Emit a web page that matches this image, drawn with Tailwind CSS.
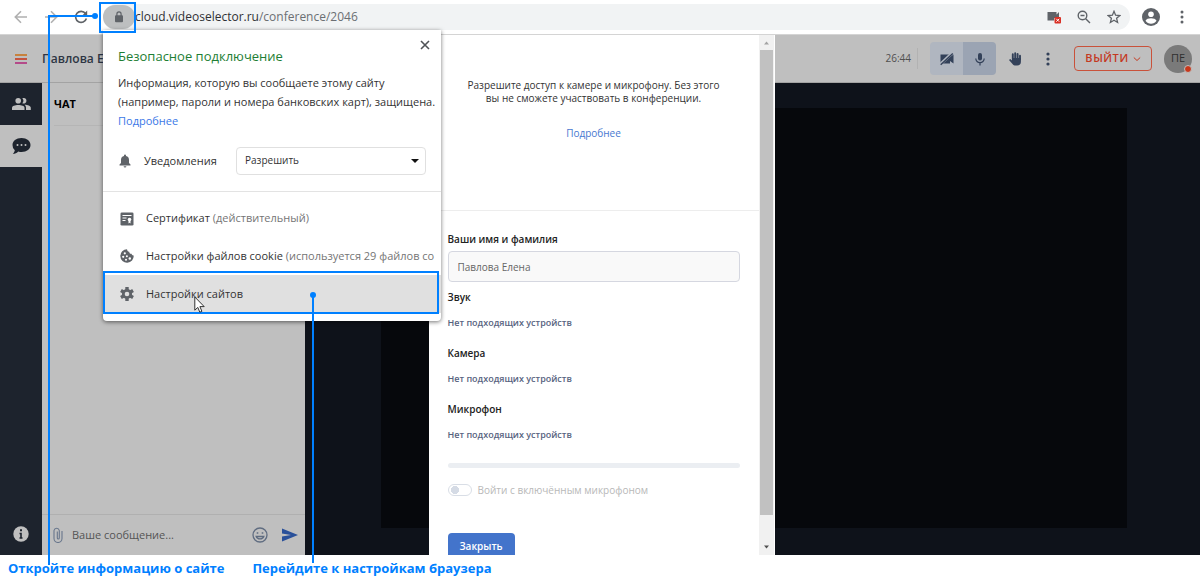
<!DOCTYPE html>
<html lang="ru">
<head>
<meta charset="utf-8">
<meta name="viewport" content="width=device-width, initial-scale=1">
<title>Настройки сайта</title>
<script src="https://cdn.jsdelivr.net/npm/@tailwindcss/browser@4"></script>
</head>
<body class="relative flex min-h-screen flex-col overflow-x-hidden bg-white font-['Open_Sans','Noto_Sans',sans-serif] text-xs text-[#333]">

<!-- Browser toolbar -->
<header class="flex h-[35px] shrink-0 items-center border-b border-[#d4d4d4] pr-3">
  <nav class="flex w-[103px] shrink-0 items-center gap-4 pl-3.5" aria-label="Навигация">
    <button aria-label="Назад" class="text-[#b0b0b0]"><svg class="size-3.5" viewBox="0 0 14 14" fill="none" stroke="currentColor" stroke-width="1.6"><path d="M13 7H1.5M7 1.3 1.3 7 7 12.7"/></svg></button>
    <button aria-label="Вперёд" class="text-[#b0b0b0]"><svg class="size-3.5" viewBox="0 0 14 14" fill="none" stroke="currentColor" stroke-width="1.6"><path d="M1 7h11.500M7 1.300 12.700 7 7 12.700"/></svg></button>
    <button aria-label="Обновить" class="text-[#5f6368]"><svg class="size-3.5" viewBox="0 0 14 14" fill="none" stroke="currentColor" stroke-width="1.700"><path d="M11.500 3.500A5.500 5.500 0 1 0 12.400 8.500"/><path d="M13.200.500v5.200H8z" fill="currentColor" stroke="none"/></svg></button>
  </nav>
  <div class="flex h-[26px] min-w-0 flex-1 items-center rounded-full bg-[#f1f3f4] pr-[9px]">
    <button aria-label="Сведения о сайте" class="flex h-6 w-8 shrink-0 items-center justify-center rounded-full bg-[#bdbfc0] text-[#5f6368]"><svg class="h-3 w-2.5" viewBox="0 0 10 12"><rect x="1" y="4.300" width="8" height="7" rx="1" fill="currentColor"/><path d="M2.900 5V3a2.100 2.100 0 0 1 4.200 0v2" fill="none" stroke="currentColor" stroke-width="1.200"/></svg></button>
    <p class="min-w-0 flex-1 truncate text-xs text-[#6b6f73]"><span class="text-[#303134]">cloud.videoselector.ru</span>/conference/2046</p>
    <div class="flex shrink-0 items-center gap-4 text-[#5f6368]">
      <button aria-label="Камера заблокирована"><svg class="size-3.5" viewBox="0 0 14 14"><path d="M.500 2h9v2.500L12 2v6H7v2.500H.500z" fill="currentColor"/><rect x="7.500" y="7" width="6.500" height="6.500" rx="1" fill="#d93025"/><path d="m9.300 8.800 2.900 2.900m0-2.900-2.900 2.900" stroke="#fff"/></svg></button>
      <button aria-label="Масштаб"><svg class="size-3.5" viewBox="0 0 14 14" fill="none" stroke="currentColor" stroke-width="1.400"><circle cx="5.500" cy="5.500" r="4.300"/><path d="m8.700 8.700 4.300 4.300M3.500 5.500h4"/></svg></button>
      <button aria-label="В закладки"><svg class="size-3.5" viewBox="0 0 14 14" fill="none" stroke="currentColor" stroke-width="1.300"><path d="m7 1.300 1.600 3.900 4.200.400-3.200 2.700 1 4.200L7 10.300l-3.600 2.200 1-4.200-3.200-2.700 4.200-.400z"/></svg></button>
    </div>
  </div>
  <button aria-label="Профиль" class="ml-3 shrink-0 text-[#5f6368]"><svg class="size-[18px]" viewBox="0 0 18 18"><circle cx="9" cy="9" r="9" fill="currentColor"/><circle cx="9" cy="6.300" r="2.800" fill="#fff"/><path d="M3.500 12.800c1.200-3.300 9.800-3.300 11 0a6.600 6.600 0 0 1-11 0z" fill="#fff"/></svg></button>
  <button aria-label="Меню браузера" class="ml-4 shrink-0 px-1 text-[#5f6368]"><svg class="h-3.5 w-1" viewBox="0 0 4 14" fill="currentColor"><circle cx="2" cy="2" r="1.500"/><circle cx="2" cy="7" r="1.500"/><circle cx="2" cy="12" r="1.500"/></svg></button>
</header>

<!-- Conference page -->
<main class="relative flex flex-1 flex-col overflow-hidden">
  <div class="flex h-12 shrink-0 items-center border-b border-[#a3a3a3] bg-[#bfbfbf] pr-2">
    <button aria-label="Меню" class="flex w-[42px] shrink-0 justify-center"><svg class="h-2.5 w-3" viewBox="0 0 12 10"><path d="M0 1h12" stroke="#c9731d" stroke-width="1.600"/><path d="M0 5h12" stroke="#c4391f" stroke-width="1.600"/><path d="M0 9h12" stroke="#b22d7c" stroke-width="1.600"/></svg></button>
    <h1 class="flex-1 text-xs font-semibold text-[#2d3543]">Павлова Елена</h1>
    <time class="border-r border-[#b2b2b2] py-1 pr-1.5 text-[10px] text-[#505050]">26:44</time>
    <div class="ml-3 flex overflow-hidden rounded text-[#334159]">
      <button aria-label="Камера" class="flex h-[33px] w-[33px] items-center justify-center bg-[#b0b6c0]"><svg class="size-3.5" viewBox="0 0 14 14"><path d="M.500 2.500H10V5l3.500-2.500v9L10 9v2.500H.500z" fill="currentColor"/><path d="M0 12.500 12.500.800" stroke="#b0b6c0" stroke-width="3"/><path d="M.700 12.800 12.800 1.500" stroke="currentColor" stroke-width="1.400"/></svg></button>
      <button aria-label="Микрофон" class="flex h-[33px] w-[33px] items-center justify-center bg-[#9ba4b3]"><svg class="h-3.5 w-3" viewBox="0 0 12 14"><rect x="4" y="1" width="4" height="7.500" rx="2" fill="currentColor"/><path d="M1.800 6.500a4.200 4.200 0 0 0 8.400 0M6 10.700v2.800" fill="none" stroke="currentColor" stroke-width="1.200"/></svg></button>
    </div>
    <button aria-label="Поднять руку" class="ml-3 text-[#334159]"><svg class="h-3.5 w-3.5" viewBox="0 0 14 14"><path d="M4.800 7V2.200M7.200 6.500V1.300M9.600 6.800V1.900M12 7.500V3.700" stroke="currentColor" stroke-width="1.900" stroke-linecap="round"/><path d="M4 6h8.900v4c0 2-1.400 3.600-3.700 3.600H7.800c-1.500 0-2.500-.700-3.300-1.700L1 8c.500-.900 1.500-.900 2.200-.300L4 8.400z" fill="currentColor"/></svg></button>
    <button aria-label="Ещё" class="ml-5 px-1 text-[#334159]"><svg class="h-3.5 w-1" viewBox="0 0 4 14" fill="currentColor"><circle cx="2" cy="2" r="1.600"/><circle cx="2" cy="7" r="1.600"/><circle cx="2" cy="12" r="1.600"/></svg></button>
    <button class="ml-5 flex h-[25px] w-[78px] items-center justify-center gap-1 rounded-sm border border-[#c9513a] text-[11px] font-semibold tracking-wider text-[#c4391f]">ВЫЙТИ<svg class="h-2 w-2" viewBox="0 0 8 8" fill="none" stroke="currentColor"><path d="m.800 2.500 3.200 3 3.200-3"/></svg></button>
    <div class="relative ml-3 flex size-7 items-center justify-center rounded-full bg-[#7a7a7a] text-[11px] text-[#2f2f2f]">ПЕ<span class="absolute right-0 bottom-0 size-2 rounded-full border border-[#bfbfbf] bg-[#c8371b]"></span></div>
  </div>

  <div class="flex min-h-0 flex-1">
    <nav class="flex w-[42px] shrink-0 flex-col bg-[#1d232d] text-[#bfbfbf]" aria-label="Разделы">
      <button aria-label="Участники" class="flex h-[42px] items-center justify-center"><svg class="h-3 w-[19px]" viewBox="0 0 19 12" fill="currentColor"><circle cx="6.200" cy="2.800" r="2.800"/><path d="M0 12V9.800C0 6 12.500 6 12.500 9.800V12z"/><path d="M10.300 5.200a3.600 3.600 0 0 0 0-4.900 2.800 2.800 0 1 1 0 4.900zM14 12V9.800c0-1.300-.600-2.300-1.500-3 2.700-.100 6.300.900 6.300 3V12z"/></svg></button>
      <button aria-label="Чат" class="flex h-[42px] items-center justify-center bg-[#bfbfbf] text-[#1d232d]"><svg class="h-[18px] w-[19px]" viewBox="0 0 19 18"><path d="M9.500 1C14.800 1 18.500 4 18.500 8s-3.700 7-9 7c-1.100 0-2.200-.100-3.200-.500C5 15.800 3 17 .800 17c1-.900 1.800-2.300 2-3.700A6.700 6.700 0 0 1 .500 8C.500 4 4.200 1 9.500 1z" fill="currentColor"/><path d="M5.500 8h.010M9.500 8h.010M13.500 8h.010" stroke="#bfbfbf" stroke-width="2" stroke-linecap="round"/></svg></button>
      <button aria-label="Информация" class="mt-auto flex h-[42px] items-center justify-center"><svg class="size-4" viewBox="0 0 16 16"><circle cx="8" cy="8" r="7.700" fill="currentColor"/><path d="M8 3.300v2" stroke="#1d232d" stroke-width="2"/><path d="M6.500 7.500H8V12M6.500 12h3" stroke="#1d232d" stroke-width="1.600" fill="none"/></svg></button>
    </nav>
    <section class="flex w-[263px] shrink-0 flex-col bg-[#bfbfbf]">
      <h2 class="ml-3 flex h-[43px] items-center border-b border-[#b5b5b5] text-[11px] font-bold text-black">ЧАТ</h2>
      <div class="flex-1"></div>
      <form class="flex h-[41px] items-center border-t border-[#b0b0b0] pr-[7px] pl-[11px]">
        <button type="button" aria-label="Прикрепить файл" class="text-[#68768c]"><svg class="h-4 w-2.5" viewBox="0 0 10 16" fill="none" stroke="currentColor" stroke-width="1.100"><path d="M9 4v7.500a4 4 0 0 1-8 0V3.500a2.700 2.700 0 0 1 5.300 0V11a1 1 0 0 1-2 0V4.500"/></svg></button>
        <input aria-label="Ваше сообщение" placeholder="Ваше сообщение..." class="ml-[9px] min-w-0 flex-1 bg-transparent text-[11px] placeholder:text-[#555]">
        <button type="button" aria-label="Смайлики" class="text-[#5f6c80]"><svg class="size-4" viewBox="0 0 16 16" fill="none" stroke="currentColor" stroke-width="1.300"><circle cx="8" cy="8" r="7"/><path d="M4.200 9.500c1.200 3.200 6.400 3.200 7.600 0z"/><path d="M5.500 5.300v1.500M10.500 5.300v1.500" stroke-width="1.600"/></svg></button>
        <button aria-label="Отправить" class="ml-3.5 text-[#29509a]"><svg class="h-3.5 w-4" viewBox="0 0 16 14" fill="currentColor"><path d="M0 .500 16 7 0 13.500V8.500L9 7 0 5.500z"/></svg></button>
      </form>
    </section>
    <section class="flex flex-1 bg-[#0e121a] pt-[25px] pr-[73px] pb-[27px] pl-[76px]" aria-label="Видео"><div class="flex-1 bg-[#06080c]"></div></section>
  </div>

  <!-- Device dialog -->
  <div class="absolute inset-0 flex justify-center pl-[3px]">
    <div role="dialog" aria-label="Настройки устройств" class="flex w-[346px] overflow-hidden border-r border-white bg-white">
      <div class="min-w-0 flex-1">
        <div class="flex h-[176px] flex-col items-center border-b border-[#ededed] pt-11 text-center">
          <p class="text-[10px] leading-[13px] text-[#333]">Разрешите доступ к камере и микрофону. Без этого<br>вы не сможете участвовать в конференции.</p>
          <a href="#" class="mt-5 text-[10px] leading-4 text-[#4878d0]">Подробнее</a>
        </div>
        <form class="flex flex-col px-[19px] pt-5">
          <label for="name" class="text-[10px] leading-4 font-semibold text-[#222]">Ваши имя и фамилия</label>
          <input id="name" value="Павлова Елена" class="mt-1 h-[31px] rounded-sm border border-[#d5d7e0] bg-[#f9f9f9] px-[9px] text-[10px] text-[#666]">
          <h3 class="mt-[7px] text-[10px] leading-4 font-semibold text-[#222]">Звук</h3>
          <p class="mt-2.5 text-[9px] leading-4 font-semibold text-[#576380]">Нет подходящих устройств</p>
          <h3 class="mt-3.5 text-[10px] leading-4 font-semibold text-[#222]">Камера</h3>
          <p class="mt-2.5 text-[9px] leading-4 font-semibold text-[#576380]">Нет подходящих устройств</p>
          <h3 class="mt-3.5 text-[10px] leading-4 font-semibold text-[#222]">Микрофон</h3>
          <p class="mt-2.5 text-[9px] leading-4 font-semibold text-[#576380]">Нет подходящих устройств</p>
          <div class="mt-5 h-[5px] rounded-full bg-[#ebeef2]"></div>
          <label class="mt-3.5 flex items-center gap-1.5 text-[10px] leading-4 text-[#b8b8b8]"><input type="checkbox" disabled class="h-3 w-6 appearance-none rounded-full border border-[#d9dee6] bg-[radial-gradient(circle_at_6px_5px,#d5dbe5_4px,transparent_4px)]">Войти с включённым микрофоном</label>
          <button type="button" class="mt-[35px] h-7 w-[67px] rounded-sm bg-[#4374cb] text-[10px] font-semibold text-white">Закрыть</button>
        </form>
      </div>
      <div class="flex w-[15px] shrink-0 flex-col items-center bg-[#f1f1f1]" aria-hidden="true">
        <svg class="size-[15px] shrink-0" viewBox="0 0 15 15"><path d="m5 9.500 2.500-3 2.500 3z" fill="#a3a3a3"/></svg>
        <div class="w-[13px] flex-1 bg-[#c1c1c1]"></div>
        <svg class="h-10 w-[15px] shrink-0" viewBox="0 0 15 40"><path d="m5 30.500 2.500 3 2.500-3z" fill="#505050"/></svg>
      </div>
    </div>
  </div>
</main>

<footer class="flex h-7 shrink-0 items-center gap-7 pl-2 text-[13px] font-bold text-[#0080ff]">
  <p>Откройте информацию о сайте</p>
  <p>Перейдите к настройкам браузера</p>
</footer>

<!-- Site information popup -->
<section role="dialog" aria-label="Безопасное подключение" class="absolute top-[30px] left-[103px] w-[338px] rounded-b-sm bg-white pb-2 shadow-[0_1px_4px_rgba(0,0,0,0.55)]">
  <div class="border-b border-[#e3e3e3] px-[15px] py-4">
    <div class="flex items-start justify-between">
      <h2 class="text-[13px] leading-5 text-[#1e7e34]">Безопасное подключение</h2>
      <button aria-label="Закрыть" class="-mt-2.5 -mr-2 p-1 text-[#505357]"><svg class="size-2.5" viewBox="0 0 10 10" stroke="currentColor" stroke-width="1.600"><path d="m1 1 8 8M9 1 1 9"/></svg></button>
    </div>
    <p class="mt-[7px] text-[11px] leading-[19px] whitespace-nowrap text-[#333]">Информация, которую вы сообщаете этому сайту<br>(например, пароли и номера банковских карт), защищена.<br><a href="#" class="text-[#3b78e7]">Подробнее</a></p>
    <div class="mt-[17px] flex items-center">
      <svg class="h-3.5 w-3.5 text-[#5f6368]" viewBox="0 0 14 14" fill="currentColor"><path d="M1.500 11.500v-1L3 9V6a4 4 0 0 1 3-3.900V1.500a1 1 0 0 1 2 0v.600A4 4 0 0 1 11 6v3l1.500 1.500v1zM5.600 12.200h2.800a1.400 1.400 0 0 1-2.800 0z"/></svg>
      <label for="notify" class="ml-3 w-[92px] text-[11px] text-[#333]">Уведомления</label>
      <div class="grid flex-1 items-center">
        <select id="notify" class="col-start-1 row-start-1 h-7 w-full appearance-none rounded-sm border border-[#e0e0e0] bg-white px-2 text-[10px] text-[#333]"><option>Разрешить</option><option>Блокировать</option></select>
        <svg class="pointer-events-none col-start-1 row-start-1 mr-[7px] h-1 w-2 justify-self-end" viewBox="0 0 8 4"><path d="M0 0h8L4 4z" fill="#111"/></svg>
      </div>
    </div>
  </div>
  <ul class="pt-2 text-[11px] text-[#333]">
    <li><button class="flex h-[37px] w-full items-center gap-3 pr-1 pl-[17px] text-left"><svg class="size-3.5 shrink-0" viewBox="0 0 14 14"><rect x=".500" y=".500" width="13" height="13" rx="1.300" fill="#5f6368"/><path d="M2.500 3.500h9M2.500 6h4M2.500 8.500h3" stroke="#fff" stroke-width="1.100"/><circle cx="9.500" cy="7.500" r="1.800" fill="#fff"/><path d="M8.500 8.500h2v3l-1-.800-1 .800z" fill="#fff"/></svg><span>Сертификат <span class="text-[#757575]">(действительный)</span></span></button></li>
    <li><button class="flex h-[38px] w-full items-center gap-3 pr-1 pl-[17px] text-left"><svg class="size-3.5 shrink-0" viewBox="0 0 14 14"><path d="M7 .300c.300 1.600.800 2.500 2.200 2.400.100 1.500.900 2.300 2.300 2 .300 1.200 1 1.800 2.200 1.800A6.700 6.700 0 1 1 7 .300z" fill="#5f6368"/><g fill="#fff"><circle cx="4.800" cy="4.300" r="1.100"/><circle cx="3.200" cy="7.800" r="1.100"/><circle cx="6.900" cy="7.200" r="1"/><circle cx="6" cy="10.800" r="1"/><circle cx="9.800" cy="9.500" r="1.200"/></g></svg><span class="whitespace-nowrap">Настройки файлов cookie <span class="text-[#757575]">(используется 29 файлов co</span></span></button></li>
    <li><button class="flex h-[38px] w-full items-center gap-3 bg-[#e0e0e0] pr-1 pl-[17px] text-left"><svg class="size-3.5 shrink-0" viewBox="0 0 14 14"><g stroke="#5f6368" stroke-width="3.400"><path d="M7 0v14M.940 3.500l12.120 7M.940 10.500l12.120-7"/></g><circle cx="7" cy="7" r="5.100" fill="#5f6368"/><circle cx="7" cy="7" r="2.300" fill="#e0e0e0"/></svg><span>Настройки сайтов</span></button></li>
  </ul>
</section>

<!-- Callouts and mouse pointer -->
<div class="pointer-events-none absolute inset-0" aria-hidden="true">
  <div class="absolute top-0.5 left-[99px] h-[31px] w-[37px] border-2 border-[#0080ff]"></div>
  <div class="absolute top-[15px] bottom-[18px] left-12 w-[47px] border-t-2 border-l-2 border-[#0080ff]"></div>
  <div class="absolute top-[13px] left-[92px] size-1.5 rounded-full bg-[#0080ff]"></div>
  <div class="absolute top-[271px] left-[103px] h-[43px] w-[336px] border-2 border-[#0080ff] shadow-[inset_0_2px_0_#fff]"></div>
  <div class="absolute top-[295px] bottom-5 left-[312px] w-0.5 bg-[#0080ff]"></div>
  <div class="absolute top-[292px] left-[310px] size-1.5 rounded-full bg-[#0080ff]"></div>
  <svg class="absolute top-[296px] left-[194px] h-[17px] w-3" viewBox="0 0 12 17"><path d="M.800 1v13.200l3-2.800 2 4.800 2.100-.900-2-4.700h4.300z" fill="#fff" stroke="#333"/></svg>
</div>
</body>
</html>
